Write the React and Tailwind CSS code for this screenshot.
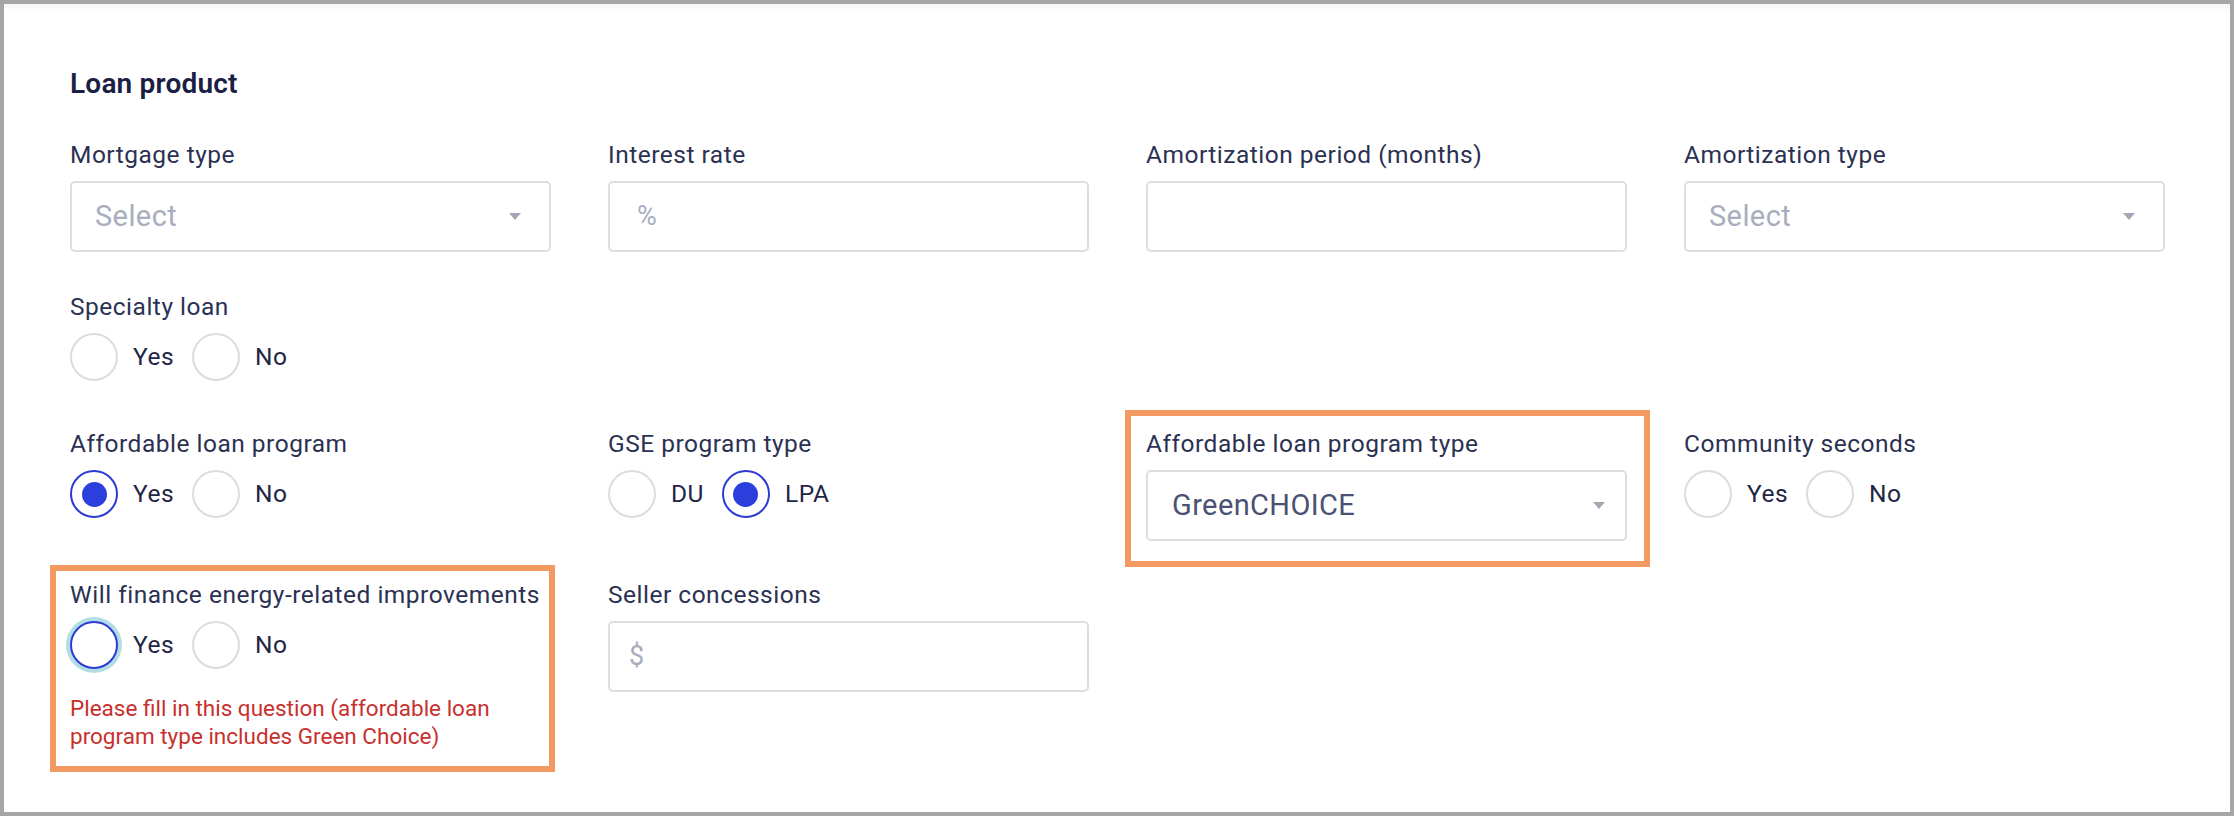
import clsx from "clsx";

function Caret() {
  return (
    <svg width="12" height="7" viewBox="0 0 12 7" className="shrink-0">
      <polygon points="0,0 12,0 6,7" fill="#a3a7b5" />
    </svg>
  );
}

function Label({ children }) {
  return (
    <div className="mb-[12px] text-[24.5px] leading-[28px] tracking-[0.5px] text-[#2b3152] whitespace-nowrap">
      {children}
    </div>
  );
}

function SelectBox({ value, caretRight = "pr-[28px]" }) {
  return (
    <div
      className={clsx(
        "flex h-[71px] items-center justify-between rounded-[5px] border-2 border-[#dcdee3] bg-white",
        value ? "pl-[24px]" : "pl-[23px]",
        caretRight,
      )}
    >
      <span
        className={clsx(
          "text-[29px] leading-none tracking-[0.4px]",
          value ? "text-[#4a5172]" : "text-[#a9adbd]",
        )}
      >
        {value || "Select"}
      </span>
      <Caret />
    </div>
  );
}

function TextBox({ placeholder, pad = "pl-[24px]" }) {
  return (
    <div
      className={clsx(
        "flex h-[71px] items-center rounded-[5px] border-2 border-[#dcdee3] bg-white",
        pad,
      )}
    >
      <span className="text-[27px] leading-none text-[#a9adbd]">
        {placeholder}
      </span>
    </div>
  );
}

function Radio({ label, state = "off" }) {
  const on = state === "on";
  const focus = state === "focus";
  return (
    <div className="mr-[18px] flex items-center">
      <span
        className={clsx(
          "flex h-[48px] w-[48px] items-center justify-center rounded-full border-2 bg-white",
          on || focus ? "border-[#2b3bd3]" : "border-[#dadce2]",
          focus && "ring-4 ring-[#b3dde5]",
        )}
      >
        {on && <span className="h-[25px] w-[25px] rounded-full bg-[#2b3fdc]" />}
      </span>
      <span className="ml-[15px] text-[24.5px] leading-none tracking-[0.5px] text-[#1f2545]">
        {label}
      </span>
    </div>
  );
}

function RadioGroup({ options }) {
  return (
    <div className="flex h-[48px] items-center">
      {options.map(([label, state]) => (
        <Radio key={label} label={label} state={state} />
      ))}
    </div>
  );
}

function Field({ label, children }) {
  return (
    <div>
      <Label>{label}</Label>
      {children}
    </div>
  );
}

const rowClass = "grid grid-cols-[repeat(4,481px)] gap-x-[57px]";

export default function App() {
  return (
    <div
      className="relative h-[816px] w-[2234px] overflow-hidden border-4 border-[#a6a6a6] bg-white shadow-[inset_0_10px_10px_-8px_rgba(0,0,0,0.06)]"
      style={{ fontFamily: "Roboto, 'Liberation Sans', sans-serif" }}
    >
      <div className="pl-[66px] pt-[63px]">
        <h2 className="text-[28px] font-semibold leading-[33px] tracking-[0.2px] text-[#1a2044]">
          Loan product
        </h2>

        <div className={clsx(rowClass, "mt-[41px]")}>
          <Field label="Mortgage type">
            <SelectBox />
          </Field>
          <Field label="Interest rate">
            <TextBox placeholder="%" pad="pl-[27px]" />
          </Field>
          <Field label="Amortization period (months)">
            <TextBox placeholder="" />
          </Field>
          <Field label="Amortization type">
            <SelectBox />
          </Field>
        </div>

        <div className={clsx(rowClass, "mt-[41px]")}>
          <Field label="Specialty loan">
            <RadioGroup options={[["Yes", "off"], ["No", "off"]]} />
          </Field>
        </div>

        <div className={clsx(rowClass, "mt-[49px]")}>
          <Field label="Affordable loan program">
            <RadioGroup options={[["Yes", "on"], ["No", "off"]]} />
          </Field>
          <Field label="GSE program type">
            <RadioGroup options={[["DU", "off"], ["LPA", "on"]]} />
          </Field>
          <Field label="Affordable loan program type">
            <SelectBox value="GreenCHOICE" caretRight="pr-[20px]" />
          </Field>
          <Field label="Community seconds">
            <RadioGroup options={[["Yes", "off"], ["No", "off"]]} />
          </Field>
        </div>

        <div className={clsx(rowClass, "mt-[40px]")}>
          <Field label="Will finance energy-related improvements">
            <RadioGroup options={[["Yes", "focus"], ["No", "off"]]} />
            <p className="mt-[25px] text-[22.5px] leading-[28px] text-[#c8302e]">
              Please fill in this question (affordable loan
              <br />
              program type includes Green Choice)
            </p>
          </Field>
          <Field label="Seller concessions">
            <TextBox placeholder="$" pad="pl-[19px]" />
          </Field>
        </div>
      </div>

      {/* highlight annotations */}
      <div className="pointer-events-none absolute left-[1121px] top-[406px] h-[157px] w-[525px] border-[6px] border-[#f39a63]" />
      <div className="pointer-events-none absolute left-[46px] top-[561px] h-[207px] w-[505px] border-[6px] border-[#f39a63]" />
    </div>
  );
}
